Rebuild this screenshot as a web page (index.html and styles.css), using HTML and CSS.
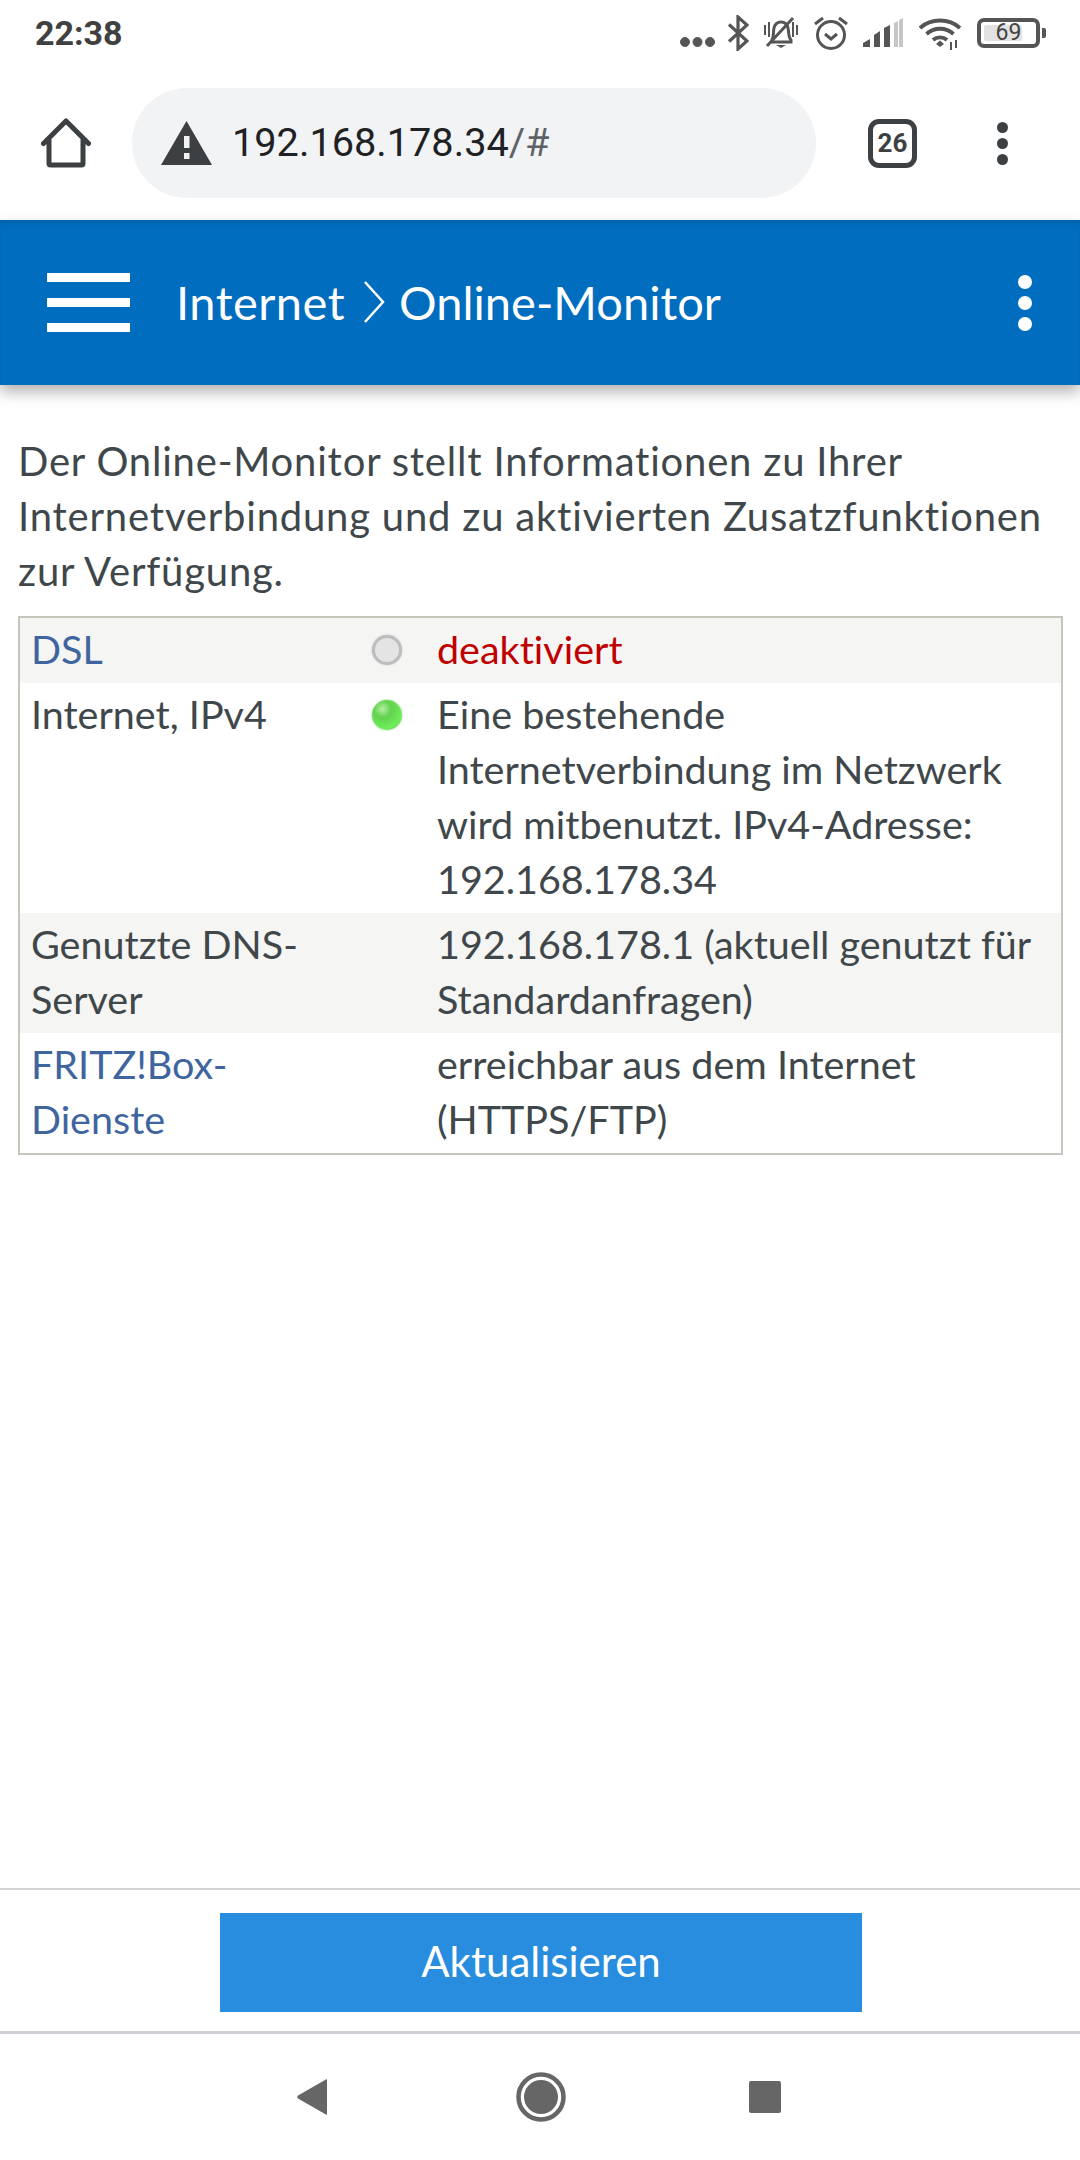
FILE: index.html
```html
<!DOCTYPE html>
<html lang="de">
<head>
  <meta charset="UTF-8" />
  <meta name="viewport" content="width=device-width,initial-scale=1" />
  <title>Online-Monitor</title>
  <link rel="stylesheet" href="styles.css">
</head>
<body>
  <div class="status-bar">
    <span class="clock">22:38</span>
    <div class="status-icons">
      <svg class="st-dots" width="35" height="10" viewBox="0 0 35 10"><circle cx="5" cy="5" r="4.5"/><circle cx="17.5" cy="5" r="4.5"/><circle cx="30" cy="5" r="4.5"/></svg>
      <svg class="st-bt" width="22" height="36" viewBox="0 0 22 36"><path d="M2 9.500 20 26 11 34V2l9 8L2 26.500" fill="none" stroke-width="3.200"/></svg>
      <svg class="st-bell" width="36" height="34" viewBox="0 0 36 34"><path d="M9 24c2-3 1-8 2-12 1-4 4-6 7-6s6 2 7 6c1 4 0 9 3 12v2H9z" fill="none" stroke-width="3"/><path d="M13 29h10l-5 3zM1 9v10h2V9zM5 6v15h2V6zM29 6v15h2V6zM33 9v10h2V9z" class="solid"/><path d="M4 30 30 2" fill="none" stroke-width="3"/></svg>
      <svg class="st-alarm" width="36" height="36" viewBox="0 0 36 36"><circle cx="18" cy="20" r="13.500" fill="none" stroke-width="3"/><path d="M12 19l6 5 6-5M2 9l8-6M34 9l-8-6" fill="none" stroke-width="3"/></svg>
      <svg class="st-signal" width="40" height="30" viewBox="0 0 40 30"><path d="M0 29v-4l7-4v8zM11 29V17l6-4v16zM21 29V10l6-3v22z" class="solid"/><path d="M31 29V5l4-2v26zM36 29V2l4-2v29z" class="faint"/></svg>
      <svg class="st-wifi" width="44" height="33" viewBox="0 0 44 33"><path d="M1 11C12 1 30 1 41 11M7.500 17C15 10 27 10 34.500 17M14 23c4-3.500 10-3.500 14 0" fill="none" stroke-width="3.800"/><path d="M21 23.500l4 3.500-4 3-4-3zM31 25v8h2v-8zM36 23v8h2v-8z" class="solid"/></svg>
      <div class="battery"><div class="battery-box"><span class="battery-fill"></span><span class="battery-num">69</span></div><span class="battery-nub"></span></div>
    </div>
  </div>

  <div class="toolbar">
    <svg class="home-icon" width="50" height="50" viewBox="0 0 50 50"><path d="M2.500 25.500 25 3l22.500 22.500M8 21v24.500c0 1 .6 1.500 1.500 1.500h31c1 0 1.500-.5 1.500-1.500V21" fill="none" stroke="#3c4043" stroke-width="5" stroke-linecap="round" stroke-linejoin="round"/></svg>
    <div class="url-pill">
      <svg class="warn-icon" width="51" height="44" viewBox="0 0 51 44"><path d="M25.500 0 51 44H0zM23 15v12h5.500V15zm0 17v6h5.500v-6z" fill="#3c4043" fill-rule="evenodd"/></svg>
      <span class="url-host">192.168.178.34</span><span class="url-rest">/#</span>
    </div>
    <div class="tab-count">26</div>
    <div class="menu-dots"><span></span><span></span><span></span></div>
  </div>

  <header class="page-header">
    <div class="burger"><span></span><span></span><span></span></div>
    <h1 class="crumbs">
      <span class="crumb-first">Internet</span>
      <svg class="crumb-sep" width="22" height="42" viewBox="0 0 22 42"><path d="M2 1l18 20L2 41" fill="none" stroke="#fff" stroke-width="2.500"/></svg>
      <span>Online-Monitor</span>
    </h1>
    <div class="header-dots"><span></span><span></span><span></span></div>
  </header>

  <main class="content">
    <p class="intro">Der Online-Monitor stellt Informationen zu Ihrer Internetverbindung und zu aktivierten Zusatzfunktionen zur Verfügung.</p>
    <table class="monitor">
      <tr class="shaded">
        <td class="col-name"><a href="#">DSL</a></td>
        <td class="col-led"><span class="led led-off"></span></td>
        <td class="col-value off-text">deaktiviert</td>
      </tr>
      <tr>
        <td class="col-name">Internet, IPv4</td>
        <td class="col-led"><span class="led led-on"></span></td>
        <td class="col-value">Eine bestehende Internetverbindung im Netzwerk wird mitbenutzt. IPv4-Adresse: 192.168.178.34</td>
      </tr>
      <tr class="shaded">
        <td class="col-name">Genutzte DNS-Server</td>
        <td class="col-led"></td>
        <td class="col-value">192.168.178.1 (aktuell genutzt für Standardanfragen)</td>
      </tr>
      <tr>
        <td class="col-name"><a href="#">FRITZ!Box-Dienste</a></td>
        <td class="col-led"></td>
        <td class="col-value">erreichbar aus dem Internet (HTTPS/FTP)</td>
      </tr>
    </table>
  </main>

  <div class="action-bar">
    <button class="refresh-btn">Aktualisieren</button>
  </div>

  <div class="nav-bar">
    <svg class="nav-back" width="30" height="36" viewBox="0 0 30 36"><path d="M30 1v34c0 1-1 1-2 0L1 19.500c-1-.8-1-2 0-3L28 1c1-1 2-1 2 0z" fill="#666"/></svg>
    <svg class="nav-home" width="50" height="50" viewBox="0 0 50 50"><circle cx="25" cy="25" r="22.500" fill="none" stroke="#666" stroke-width="4.500"/><circle cx="25" cy="25" r="17" fill="#666"/></svg>
    <svg class="nav-recent" width="32" height="32" viewBox="0 0 32 32"><rect width="32" height="32" rx="2" fill="#666"/></svg>
  </div>
</body>
</html>
```

FILE: styles.css
```css
* {
  box-sizing: border-box;
}
body {
  margin: 0;
  width: 1080px;
  height: 2160px;
  display: flex;
  flex-direction: column;
  background: #fff;
  font-family: 'Lato', sans-serif;
  font-variant-ligatures: none;
  color: #40474b;
  overflow: hidden;
}

.status-bar {
  height: 66px;
  padding: 0 34px 0 35px;
  display: flex;
  align-items: center;
  justify-content: space-between;
}
.clock {
  font-family: 'Roboto', sans-serif;
  font-weight: 700;
  font-size: 34px;
  color: #404040;
}
.status-icons {
  display: flex;
  align-items: center;
}
.status-icons svg {
  stroke: #555;
  fill: #555;
  display: block;
}
.status-icons svg .solid {
  stroke: none;
  fill: #555;
}
.status-icons svg .faint {
  stroke: none;
  fill: #c6c6c6;
}
.st-dots { margin: 18px 12px 0 0; }
.st-bt { margin-right: 14px; }
.st-bell { margin-right: 14px; }
.st-alarm { margin-right: 14px; }
.st-signal { margin-right: 16px; }
.st-wifi { margin-right: 14px; }
.battery {
  display: flex;
  align-items: center;
}
.battery-box {
  position: relative;
  width: 63px;
  height: 30px;
  border: 4px solid #555;
  border-radius: 7px;
  font-family: 'Roboto', sans-serif;
  font-size: 23px;
  line-height: 22px;
  text-align: center;
  color: #444;
}
.battery-fill {
  position: absolute;
  left: 3px;
  top: 3px;
  bottom: 3px;
  width: 38px;
  background: #e2e2e2;
  border-radius: 2px;
}
.battery-num {
  position: relative;
}
.battery-nub {
  width: 4px;
  height: 10px;
  margin-left: 2px;
  background: #555;
  border-radius: 0 2px 2px 0;
}

.toolbar {
  height: 154px;
  padding: 22px 0 22px 41px;
  display: flex;
  align-items: center;
}
.url-pill {
  width: 684px;
  height: 110px;
  margin-left: 41px;
  padding-left: 29px;
  display: flex;
  align-items: center;
  background: #f1f3f4;
  border-radius: 55px;
  font-family: 'Roboto', sans-serif;
  font-size: 39.700px;
  line-height: 112px;
}
.warn-icon {
  margin-right: 20px;
}
.url-host {
  color: #202124;
}
.url-rest {
  color: #5f6368;
}
.tab-count {
  width: 49px;
  height: 49px;
  margin-left: 52px;
  border: 5px solid #3c4043;
  border-radius: 11px;
  font-family: 'Roboto', sans-serif;
  font-weight: 700;
  font-size: 26px;
  line-height: 39px;
  text-align: center;
  color: #3c4043;
}
.menu-dots {
  margin-left: 80px;
  display: flex;
  flex-direction: column;
  gap: 5px;
}
.menu-dots span {
  width: 11px;
  height: 11px;
  border-radius: 50%;
  background: #3c4043;
}

.page-header {
  position: relative;
  height: 165px;
  padding: 0 48px 0 47px;
  display: flex;
  align-items: center;
  background: #016dbf;
  box-shadow: 0 7px 14px rgba(0,0,0,0.3), inset 0 6px 6px -4px rgba(0,0,0,0.15);
  color: white;
}
.burger {
  width: 83px;
  display: flex;
  flex-direction: column;
  gap: 16px;
}
.burger span {
  height: 9px;
  background: white;
}
.crumbs {
  flex: 1;
  margin: 0 0 0 46px;
  padding-bottom: 2px;
  font-weight: 400;
  font-size: 47px;
  line-height: 60px;
  display: flex;
  align-items: center;
  white-space: nowrap;
}
.crumb-first {
  letter-spacing: 0.5px;
}
.crumb-sep {
  margin: 0 14px 0 18px;
}
.header-dots {
  display: flex;
  flex-direction: column;
  gap: 7px;
}
.header-dots span {
  width: 14px;
  height: 14px;
  border-radius: 50%;
  background: white;
}

.content {
  flex: 1;
  padding: 49px 17px 0 18px;
  font-size: 39.500px;
  line-height: 55px;
}
.intro {
  margin: 0 0 17px;
  font-size: 40px;
  letter-spacing: 0.8px;
}
.monitor {
  width: 100%;
  border-collapse: separate;
  border-spacing: 0;
  border: 2px solid #c6c6bc;
  table-layout: fixed;
}
.monitor td {
  padding: 3px 0 7px;
  vertical-align: top;
}
.monitor .shaded td {
  background: #f5f5f3;
}
.monitor a {
  color: #3f659f;
  text-decoration: none;
}
.col-name {
  width: 352px;
  padding-left: 11px !important;
  padding-right: 40px !important;
}
.col-led {
  width: 65px;
}
.col-value {
  padding-right: 8px !important;
}
.off-text {
  color: #c00000;
}
.led {
  display: block;
  width: 30px;
  height: 30px;
  margin: 14px 0 0;
  border-radius: 50%;
}
.led-off {
  background: #e4e4e4;
  border: 3px solid #bdbdbd;
  box-shadow: 0 0 2px #bdbdbd;
}
.led-on {
  background: radial-gradient(circle at 35% 30%, #b6f0a4 0, #62d24e 30%, #6fee5c 70%, #4cb83c 100%);
  box-shadow: 0 0 2px #7ccf6c;
}

.action-bar {
  height: 143px;
  padding: 23px 0 0 2px;
  display: flex;
  justify-content: center;
  align-items: flex-start;
  border-top: 2px solid #d4d4d8;
}
.refresh-btn {
  width: 642px;
  height: 99px;
  padding-bottom: 4px;
  border: none;
  background: #288ddf;
  color: white;
  font-family: 'Lato', sans-serif;
  font-size: 42px;
}

.nav-bar {
  height: 129px;
  padding-left: 297px;
  display: flex;
  align-items: center;
  border-top: 3px solid #d0d0d6;
}
.nav-home {
  margin-left: 189px;
}
.nav-recent {
  margin-left: 183px;
}
```
